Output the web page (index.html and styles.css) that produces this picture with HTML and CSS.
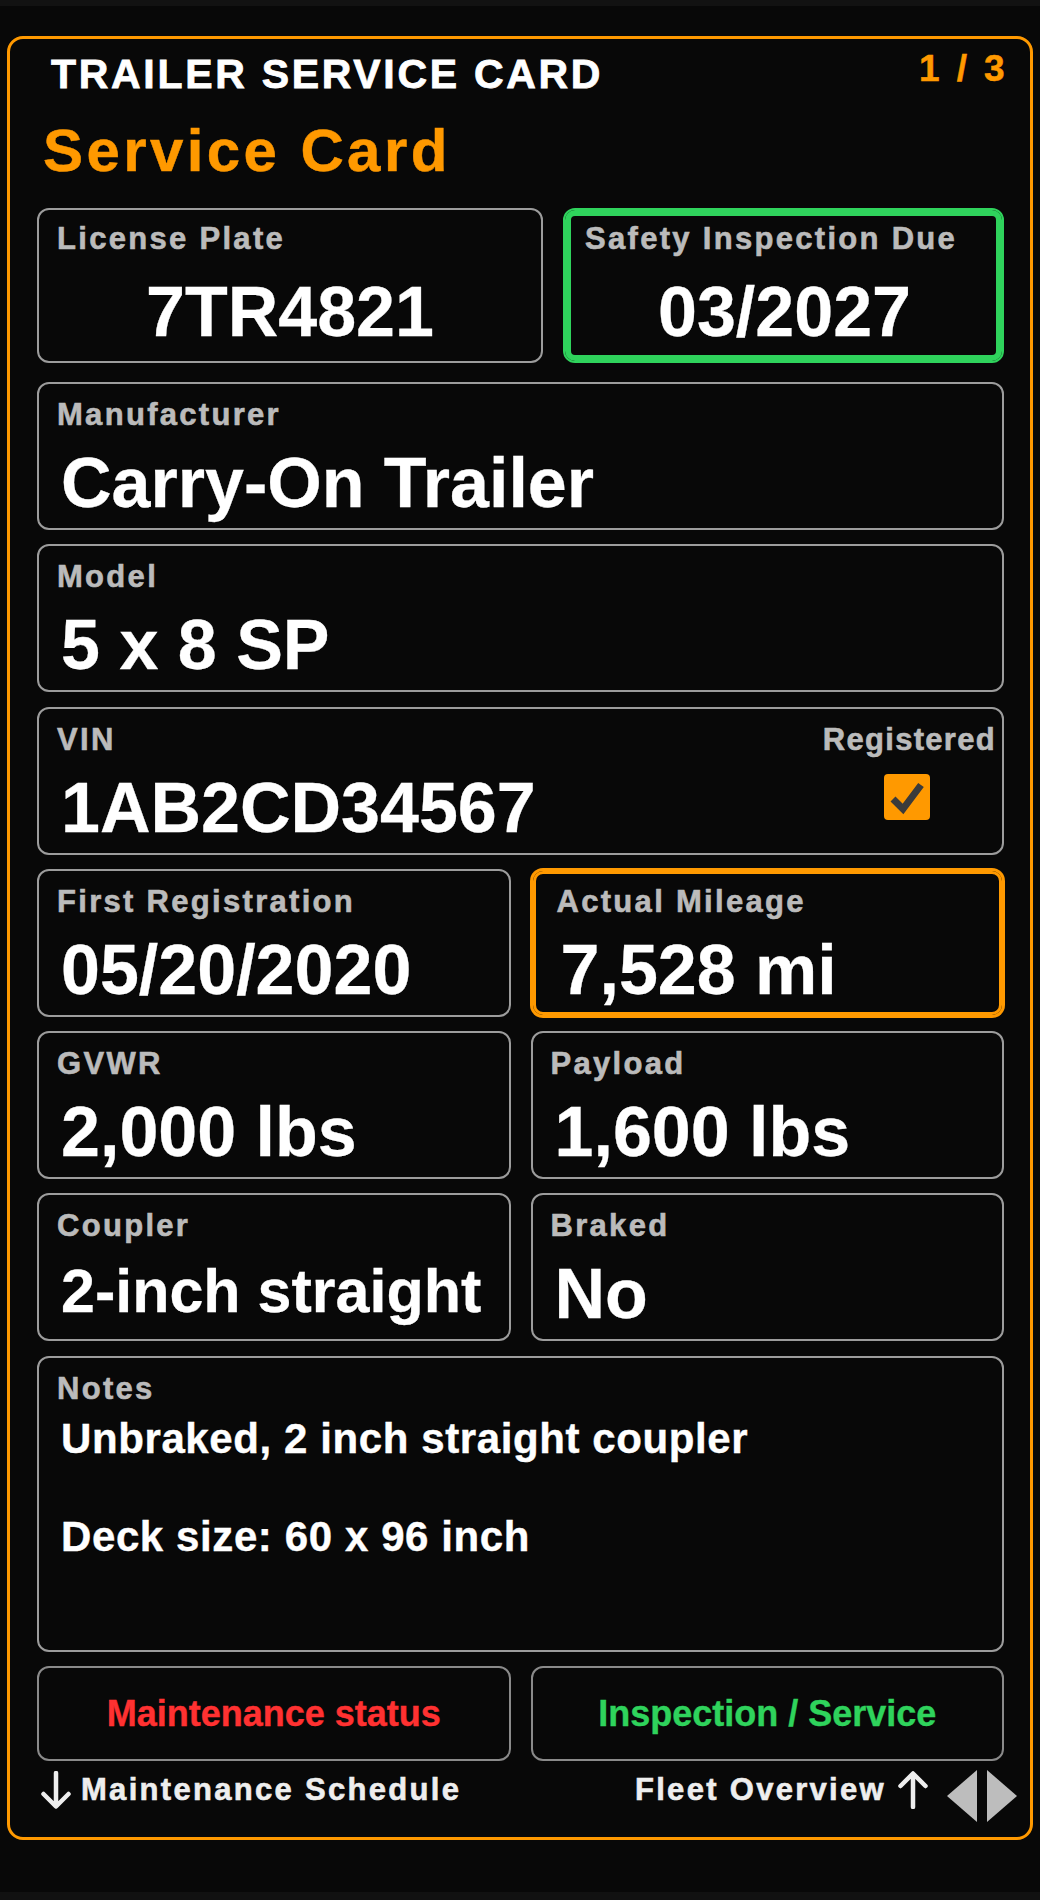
FILE: index.html
```html
<!DOCTYPE html>
<html lang="en">
<head>
    <meta charset="UTF-8">
    <title>Trailer Service Card</title>
    <link rel="stylesheet" href="styles.css">
</head>
<body>

    <div class="topbar"></div>

    <div class="card">
        <div class="card__header">
            <h1 class="card__title">TRAILER SERVICE CARD</h1>
            <span class="card__page">1 / 3</span>
        </div>
        <h2 class="card__heading">Service Card</h2>

        <div class="row row--top">
            <div class="field field--top">
                <div class="field__label">License Plate</div>
                <div class="field__value">7TR4821</div>
            </div>
            <div class="field field--top field--green">
                <div class="field__label">Safety Inspection Due</div>
                <div class="field__value">03/2027</div>
            </div>
        </div>

        <div class="fields">
            <div class="field">
                <div class="field__label">Manufacturer</div>
                <div class="field__value">Carry-On Trailer</div>
            </div>
            <div class="field">
                <div class="field__label">Model</div>
                <div class="field__value">5 x 8 SP</div>
            </div>
            <div class="field field--vin">
                <div class="field__main">
                    <div class="field__label">VIN</div>
                    <div class="field__value">1AB2CD34567</div>
                </div>
                <div class="field__side">
                    <div class="field__label field__label--tight">Registered</div>
                    <svg class="checkbox" width="46" height="46" viewBox="0 0 46 46">
                        <rect x="0" y="0" width="46" height="46" rx="4" fill="#ff9900"/>
                        <polyline points="9,25 19,35 37,11" fill="none" stroke="#3b3b3b" stroke-width="7"/>
                    </svg>
                </div>
            </div>
            <div class="row">
                <div class="field">
                    <div class="field__label">First Registration</div>
                    <div class="field__value">05/20/2020</div>
                </div>
                <div class="field field--orange">
                    <div class="field__label">Actual Mileage</div>
                    <div class="field__value">7,528 mi</div>
                </div>
            </div>
            <div class="row">
                <div class="field">
                    <div class="field__label">GVWR</div>
                    <div class="field__value">2,000 lbs</div>
                </div>
                <div class="field">
                    <div class="field__label">Payload</div>
                    <div class="field__value">1,600 lbs</div>
                </div>
            </div>
            <div class="row">
                <div class="field">
                    <div class="field__label">Coupler</div>
                    <div class="field__value field__value--fit">2-inch straight</div>
                </div>
                <div class="field">
                    <div class="field__label">Braked</div>
                    <div class="field__value">No</div>
                </div>
            </div>
            <div class="field field--notes">
                <div class="field__label">Notes</div>
                <div class="field__notes">Unbraked, 2 inch straight coupler<br><br>Deck size: 60 x 96 inch</div>
            </div>
            <div class="row">
                <button class="btn btn--red">Maintenance status</button>
                <button class="btn btn--green">Inspection / Service</button>
            </div>
        </div>

        <div class="card__footer">
            <div class="nav-link">
                <svg class="arrow" width="30" height="38" viewBox="0 0 30 38">
                    <path d="M15 2 V35 M2.5 23 L15 35.5 L27.5 23" fill="none" stroke="#eeeeee" stroke-width="4.5" stroke-linecap="round" stroke-linejoin="round"/>
                </svg>
                <span>Maintenance Schedule</span>
            </div>
            <div class="nav-link nav-link--right">
                <span>Fleet Overview</span>
                <svg class="arrow" width="30" height="38" viewBox="0 0 30 38">
                    <path d="M15 36 V3 M2.5 15 L15 2.5 L27.5 15" fill="none" stroke="#eeeeee" stroke-width="4.5" stroke-linecap="round" stroke-linejoin="round"/>
                </svg>
                <svg class="pager" width="70" height="52" viewBox="0 0 70 52">
                    <polygon points="0,26 30,0 30,52" fill="#bdbdbd"/>
                    <polygon points="40,0 70,26 40,52" fill="#bdbdbd"/>
                </svg>
            </div>
        </div>
    </div>

    <div class="bottombar"></div>

</body>
</html>
```

FILE: styles.css
```css
html {
  box-sizing: border-box;
}

*,
*::before,
*::after {
  box-sizing: inherit;
}

body {
  margin: 0;
  height: 1900px;
  display: flex;
  flex-direction: column;
  background-color: #080808;
  font-family: "Liberation Sans", Arial, sans-serif;
  font-weight: bold;
  color: #fff;
}

h1,
h2 {
  margin: 0;
  font-weight: bold;
}

.topbar {
  height: 6px;
  background-color: #121212;
}

.bottombar {
  height: 8px;
  margin-top: auto;
  background-color: #111;
}

/* outer card */

.card {
  margin: 30px 7px 0;
  border: 3px solid #ff9900;
  border-radius: 16px;
  padding: 12px 26px 15px 27px;
}

.card__header {
  display: flex;
  justify-content: space-between;
  align-items: flex-start;
  margin-left: 14px;
}

.card__title {
  font-size: 41px;
  line-height: 47px;
  letter-spacing: 2.7px;
  color: #fff;
  -webkit-text-stroke: 0.8px #fff;
}

.card__page {
  margin-top: -3px;
  margin-right: -4px;
  font-size: 37px;
  line-height: 42px;
  letter-spacing: 3.4px;
  color: #ff9900;
  -webkit-text-stroke: 0.5px #ff9900;
}

.card__heading {
  margin: 18px 0 23px 6px;
  font-size: 60px;
  line-height: 69px;
  letter-spacing: 3.4px;
  color: #ff9900;
  -webkit-text-stroke: 0.5px #ff9900;
}

/* fields */

.row {
  display: grid;
  grid-template-columns: 1fr 1fr;
  gap: 20px;
}

.row--top {
  grid-template-columns: 506px 1fr;
  margin-bottom: 19px;
}

.fields {
  display: flex;
  flex-direction: column;
  gap: 14.3px;
}

.field {
  height: 148px;
  border: 2px solid #9c9c9c;
  border-radius: 12px;
  padding: 14px 18px 0;
  background-color: #080808;
  overflow: hidden;
}

.field__label {
  font-size: 31px;
  line-height: 34px;
  letter-spacing: 2.3px;
  color: #bbbbbb;
  white-space: nowrap;
  -webkit-text-stroke: 0.6px #bbbbbb;
}

.field__label--tight {
  letter-spacing: 1.3px;
}

.field__value {
  margin-top: 11px;
  padding-left: 4px;
  font-size: 70px;
  line-height: 80px;
  color: #fff;
  white-space: nowrap;
  -webkit-text-stroke: 0.3px #fff;
}

.field__value--fit {
  font-size: 61px;
  line-height: 74px;
}

.field--top {
  height: 155px;
  padding-top: 12px;
}

.field--top .field__value {
  margin-top: 16px;
  padding-left: 0;
  text-align: center;
}

.field--green {
  border-color: #2fd35c;
  box-shadow: inset 0 0 0 6px #2fd35c;
  padding-left: 20px;
}

.field--orange {
  border-color: #ff9900;
  box-shadow: 0 0 0 1px #ff9900, inset 0 0 0 3px #ff9900;
  padding-left: 24px;
}

.field--vin {
  display: flex;
}

.field__main {
  flex: 1;
}

.field__side {
  display: flex;
  flex-direction: column;
  align-items: center;
  margin-right: -12px;
}

.checkbox {
  display: block;
  margin: 17px 5px 0 0;
}

.field--notes {
  height: 296px;
}

.field__notes {
  margin-top: 8px;
  padding-left: 4px;
  font-size: 42px;
  line-height: 49px;
  letter-spacing: 0.6px;
  color: #fff;
  -webkit-text-stroke: 0.4px #fff;
}

/* buttons */

.btn {
  height: 95px;
  border: 2px solid #8a8a8a;
  border-radius: 12px;
  background-color: #080808;
  font-family: inherit;
  font-weight: bold;
  font-size: 36px;
  display: flex;
  align-items: center;
  justify-content: center;
  padding: 0;
}

.btn--red {
  color: #ff3131;
  -webkit-text-stroke: 0.4px #ff3131;
}

.btn--green {
  color: #2fd35c;
  -webkit-text-stroke: 0.4px #2fd35c;
}

/* footer */

.card__footer {
  display: flex;
  justify-content: space-between;
  align-items: flex-start;
  margin: 8px -13px 0 4px;
}

.nav-link {
  display: flex;
  align-items: flex-start;
  gap: 10px;
  font-size: 31px;
  line-height: 42px;
  letter-spacing: 2.3px;
  color: #eeeeee;
  -webkit-text-stroke: 0.6px #eeeeee;
}

.nav-link .arrow {
  display: block;
  margin-top: 2px;
}

.nav-link--right {
  gap: 12px;
}

.nav-link--right .pager {
  display: block;
  margin-top: 1px;
  margin-left: 7px;
}
```
